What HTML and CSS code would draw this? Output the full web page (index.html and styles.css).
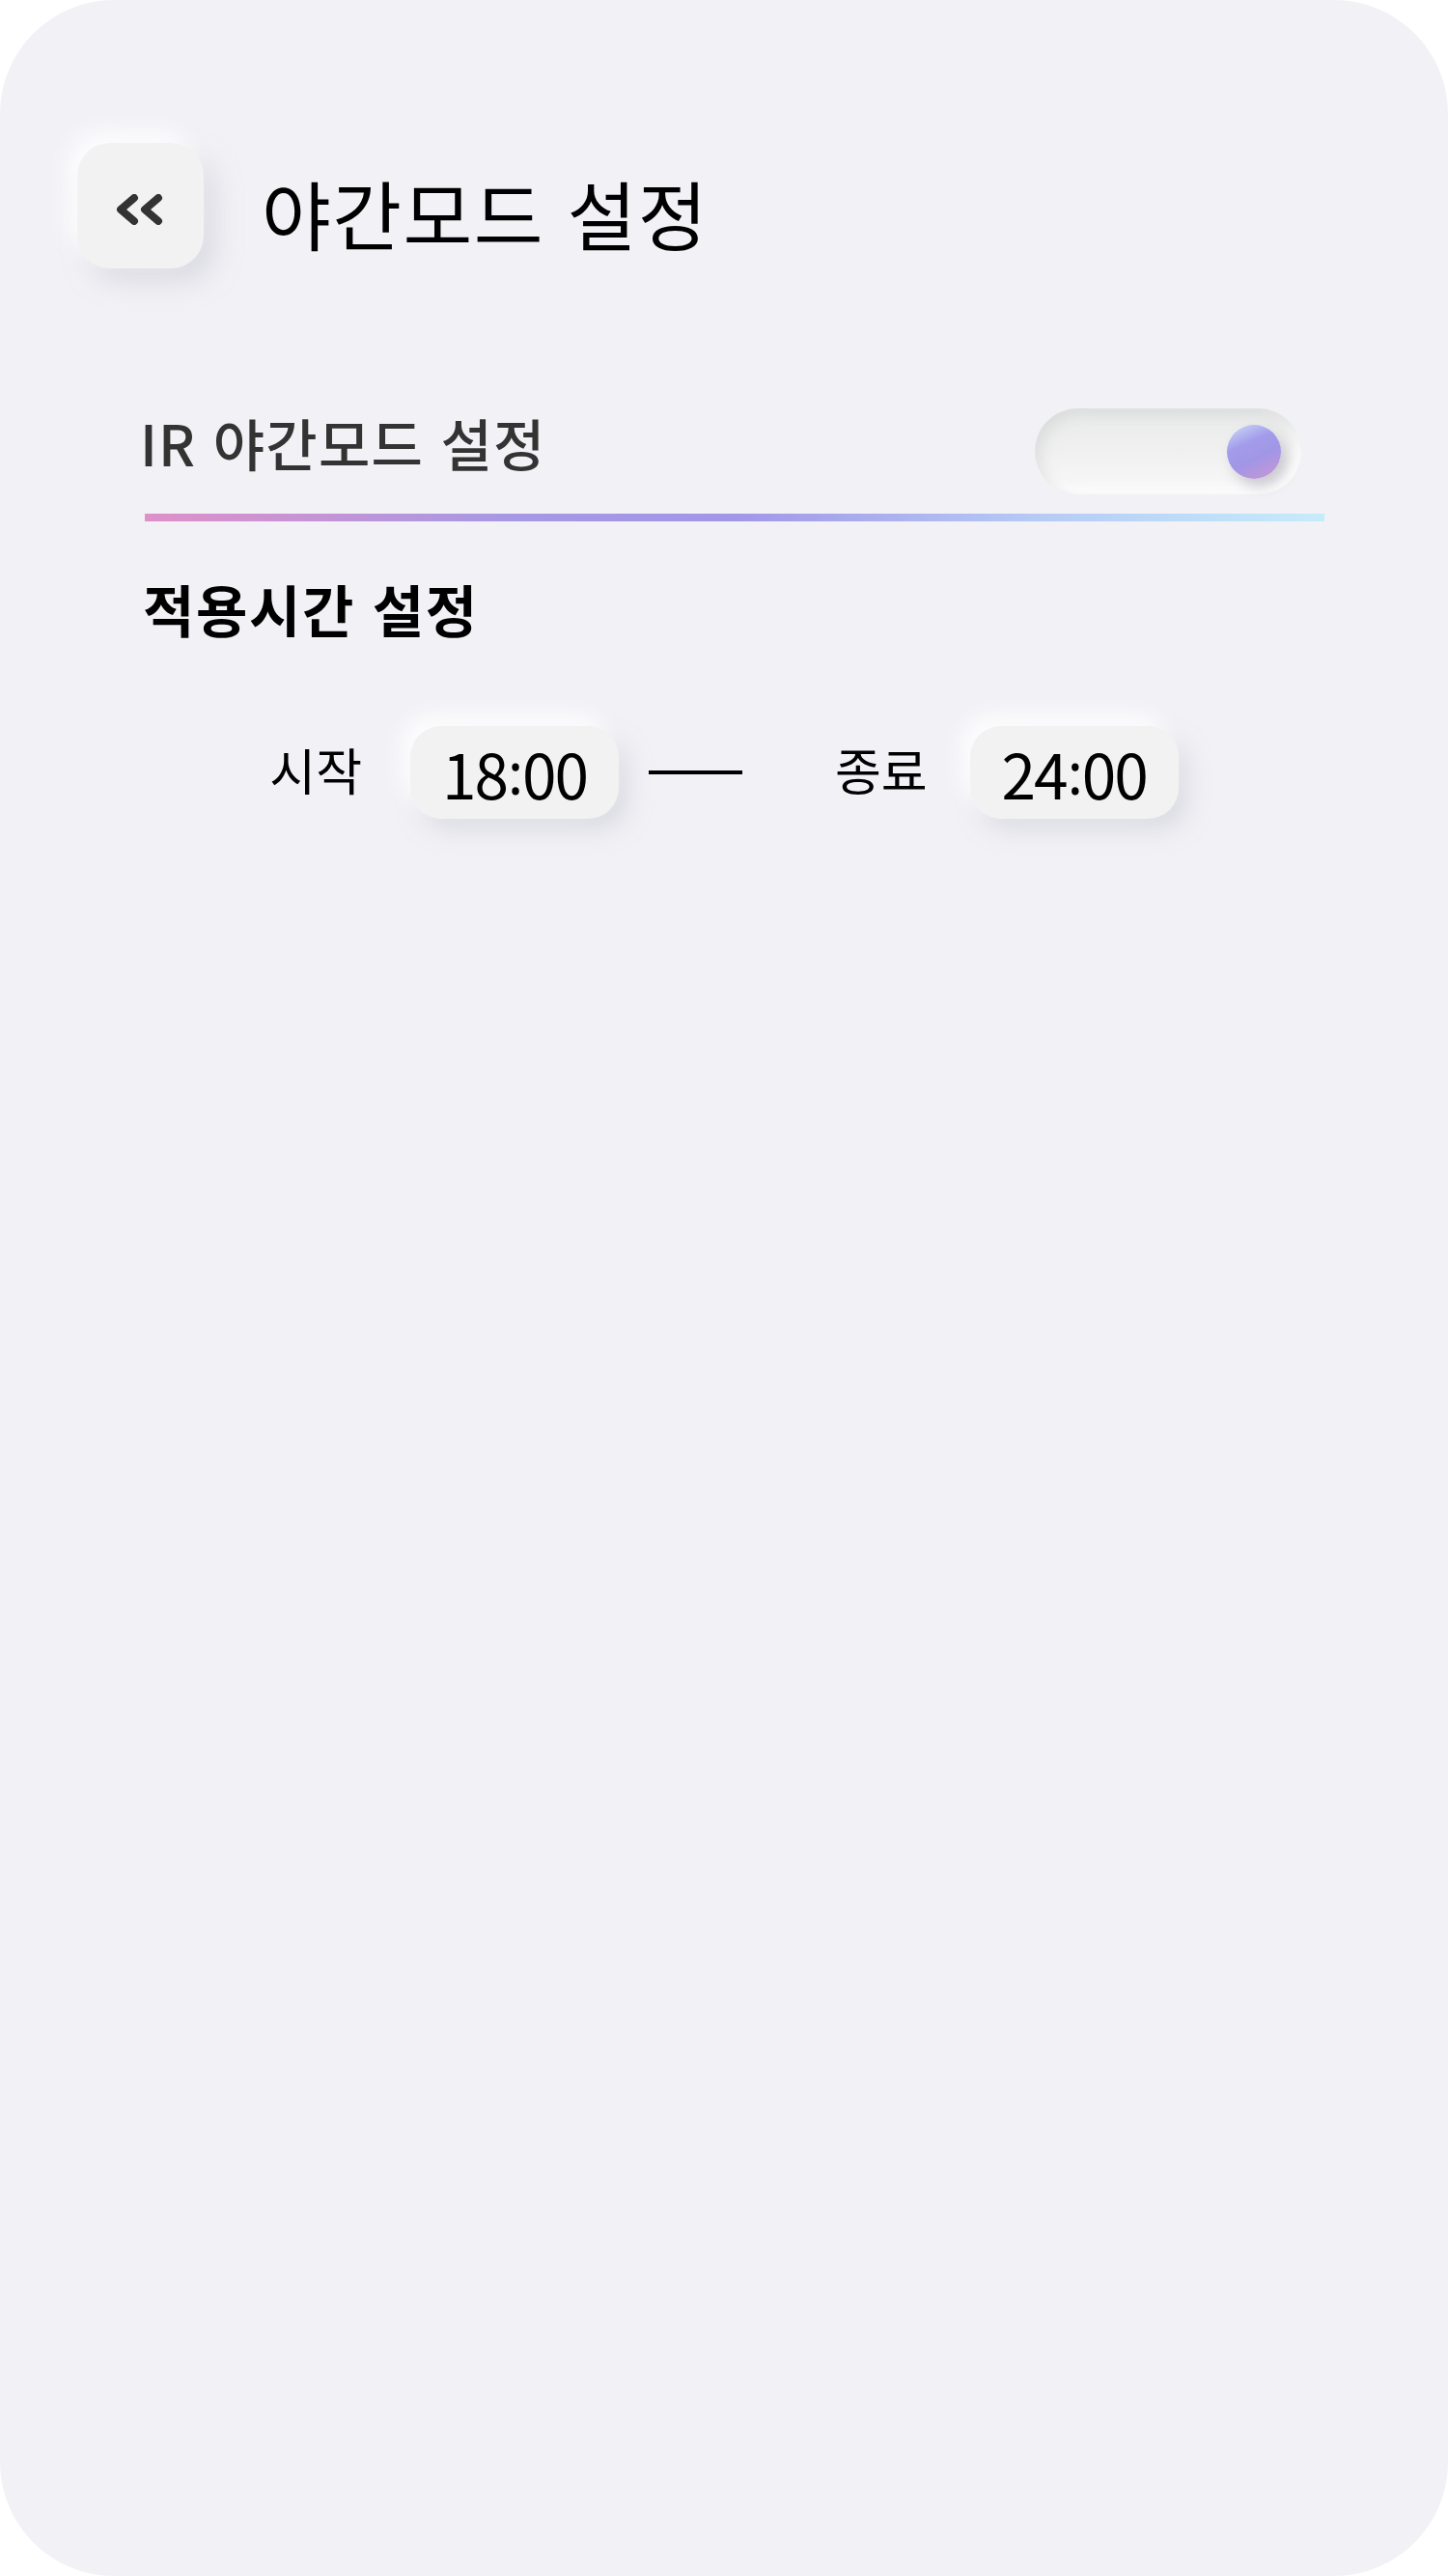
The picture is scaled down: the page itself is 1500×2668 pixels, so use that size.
FILE: index.html
```html
<!DOCTYPE html>
<html lang="ko">
<head>
<meta charset="utf-8">
<title>야간모드 설정</title>
<link rel="stylesheet" href="styles.css">
</head>
<body>
<div class="phone">
  <header class="header">
    <button class="back-btn" aria-label="뒤로">
      <svg width="48" height="32" viewBox="0 0 48 32">
        <path d="M18 4 L4 16 L18 28" fill="none" stroke="#333" stroke-width="8" stroke-linecap="round" stroke-linejoin="round"/>
        <path d="M43 4 L29 16 L43 28" fill="none" stroke="#333" stroke-width="8" stroke-linecap="round" stroke-linejoin="round"/>
      </svg>
    </button>
    <h1 class="title">야간모드 설정</h1>
  </header>

  <section class="content">
    <div class="ir-row">
      <span class="ir-label">IR 야간모드 설정</span>
      <div class="toggle"><div class="knob"></div></div>
    </div>
    <div class="divider"></div>

    <h2 class="subtitle">적용시간 설정</h2>

    <div class="time-row">
      <span class="time-label">시작</span>
      <div class="pill">18<span class="colon">:</span>00</div>
      <span class="dash"></span>
      <span class="time-label end-label">종료</span>
      <div class="pill pill-end">24<span class="colon">:</span>00</div>
    </div>
  </section>
</div>
</body>
</html>
```

FILE: styles.css
```css
* { box-sizing: border-box; }
html, body { margin: 0; padding: 0; background: #ffffff; }
body { font-family: "Noto Sans CJK KR", "Noto Sans", sans-serif; }

.phone {
  width: 1500px;
  height: 2668px;
  background: #f2f1f6;
  border-radius: 118px;
  overflow: hidden;
}

.header {
  display: flex;
  align-items: center;
  padding: 148px 0 0 80px;
}

.back-btn {
  width: 131px;
  height: 130px;
  border: none;
  border-radius: 34px;
  background: #f2f2f3;
  display: flex;
  align-items: center;
  justify-content: center;
  padding: 8px 2px 0 0;
  box-shadow: -10px -12px 24px rgba(255,255,255,0.85), 12px 14px 26px rgba(200,202,212,0.55);
}

.title {
  margin: 14px 0 0 60px;
  font-size: 78px;
  line-height: 1;
  font-weight: 400;
  color: #000;
  letter-spacing: 1.5px;
}

.content {
  padding: 0 128px 0 150px;
}

.ir-row {
  margin-top: 145px;
  display: flex;
  align-items: center;
  justify-content: space-between;
  padding-right: 24px;
}

.ir-label {
  font-size: 58px;
  font-weight: 500;
  color: #333;
  letter-spacing: 1.2px;
  line-height: 1;
  margin: -20px 0 0 -5px;
}

.toggle {
  width: 276px;
  height: 89px;
  border-radius: 45px;
  background: linear-gradient(180deg, #e9eaea 0%, #f0f0f0 50%, #f9f9f9 100%);
  box-shadow: inset 6px 6px 14px rgba(205,207,210,0.55), inset -6px -6px 12px rgba(255,255,255,0.9);
  display: flex;
  align-items: center;
  justify-content: flex-end;
  padding-right: 21px;
}

.knob {
  width: 56px;
  height: 56px;
  border-radius: 50%;
  background: linear-gradient(155deg, #cde0f7 0%, #a39ceb 35%, #a196e6 60%, #cc97d2 100%);
  box-shadow: 6px 8px 14px rgba(150,150,165,0.45);
}

.divider {
  margin-top: 20px;
  height: 8px;
  background: linear-gradient(90deg, #de90c8 0%, #a898e4 30%, #a296e8 50%, #b5c9f5 75%, #c6ecfb 100%);
}

.subtitle {
  margin: 61px 0 0 -2px;
  font-size: 58px;
  font-weight: 700;
  line-height: 1;
  color: #000;
  letter-spacing: 1.6px;
}

.time-row {
  margin: 93px 0 0 -150px;
  width: 1500px;
  display: flex;
  align-items: center;
  justify-content: center;
}

.time-label {
  font-size: 52px;
  line-height: 1;
  color: #000;
  letter-spacing: 0;
  margin-top: -6px;
}

.pill {
  width: 216px;
  height: 96px;
  border-radius: 32px;
  background: #f2f2f2;
  display: flex;
  align-items: center;
  justify-content: center;
  font-family: "Noto Sans CJK SC", "Noto Sans CJK KR", sans-serif;
  font-size: 64px;
  line-height: 1;
  color: #000;
  letter-spacing: -2px;
  margin-left: 50px;
  box-shadow: -10px -12px 22px rgba(255,255,255,0.85), 10px 12px 22px rgba(200,202,212,0.5);
}

.pill-end {
  margin-left: 44px;
}

.colon {
  font-family: "Noto Sans", sans-serif;
  font-size: 60px;
  margin: 0 1px;
}

.dash {
  width: 97px;
  height: 4px;
  background: #000;
  margin-left: 31px;
}

.end-label {
  margin-left: 96px;
}
```
